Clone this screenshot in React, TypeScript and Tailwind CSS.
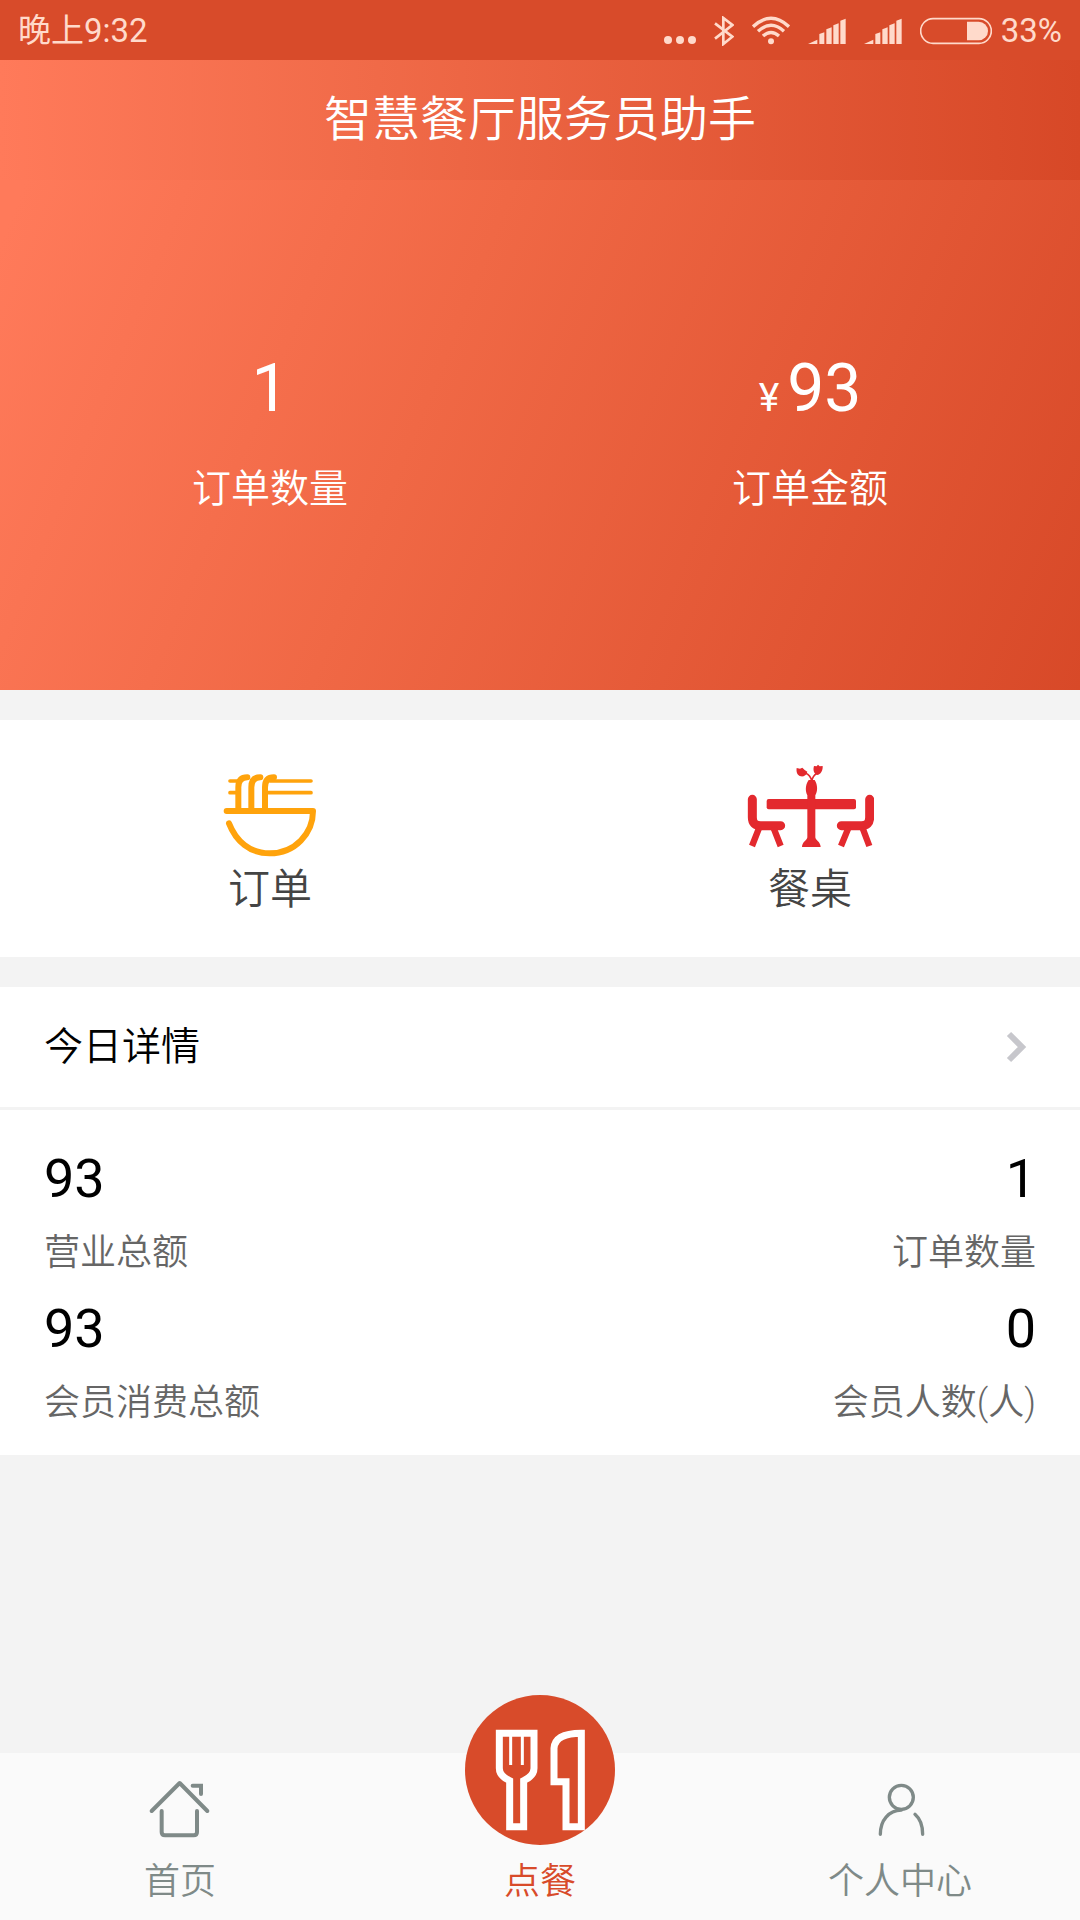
import type { ReactNode } from 'react'

interface Stat {
  value: string
  label: string
}

const stats: [Stat, Stat][] = [
  [
    { value: '93', label: '营业总额' },
    { value: '1', label: '订单数量' },
  ],
  [
    { value: '93', label: '会员消费总额' },
    { value: '0', label: '会员人数(人)' },
  ],
]

function SignalIcon() {
  return (
    <svg width="38" height="30" viewBox="508 45 114 90" fill="currentColor" aria-hidden>
      <path d="M508 129L536 116V129ZM542 129V99L557 94V129ZM563 129V85L579 79V129ZM584 129V73L600 67V129ZM605 129V59L621 53V129Z" />
    </svg>
  )
}

function StatusBar() {
  return (
    <div className="flex h-[60px] items-center justify-between bg-[#d84b2a] px-[18px] pt-[2px] text-[33px] leading-[48px] text-[#ffdacb]">
      <span>晚上9:32</span>
      <div className="flex items-center gap-[18px]">
        <svg width="32" height="30" viewBox="78 45 96 90" fill="currentColor" aria-hidden>
          <circle cx="90" cy="117" r="12" />
          <circle cx="126" cy="117" r="12" />
          <circle cx="162" cy="117" r="12" />
        </svg>
        <svg width="20" height="30" viewBox="228 45 60 90" fill="none" stroke="currentColor" strokeWidth="8" aria-hidden>
          <path d="M231 67L283 107L256 129V51L283 72L231 113" />
        </svg>
        <svg width="38" height="30" viewBox="342 45 114 90" fill="none" stroke="currentColor" strokeWidth="10" aria-hidden>
          <path d="M345 77Q399 27 453 77M360 91Q399 55 438 91M375 105Q399 84 423 105" />
          <circle cx="399" cy="121" r="9" fill="currentColor" stroke="none" />
        </svg>
        <SignalIcon />
        <SignalIcon />
        <div className="flex items-center gap-[9px]">
          <svg width="72" height="30" viewBox="831 45 216 90" fill="none" aria-hidden>
            <rect x="833" y="53" width="212" height="74" rx="37" stroke="currentColor" strokeWidth="5" />
            <path d="M972 62H1007A28 28 0 0 1 1007 118H972Z" fill="currentColor" />
          </svg>
          <span>33%</span>
        </div>
      </div>
    </div>
  )
}

function HeroStat({ unit, value, label }: { unit?: string; value: string; label: string }) {
  return (
    <div className="flex flex-col items-center text-white">
      <p className="flex items-baseline gap-2 text-[66px] leading-[80px]">
        {unit && <span className="text-[39px] leading-none">{unit}</span>}
        {value}
      </p>
      <p className="mt-6 text-[39px] leading-[72px] font-[350]">{label}</p>
    </div>
  )
}

function NoodleIcon() {
  return (
    <svg width="96" height="96" viewBox="66 42 288 288" fill="none" stroke="#ffa30c" strokeLinecap="round" strokeLinejoin="round" aria-hidden>
      <path d="M90 93H112M90 128H112M210 93H333M204 128H333" strokeWidth="11" />
      <path d="M115 178V112Q115 82 142 82M154 178V112Q154 82 181 82M195 178V112Q195 82 222 82" strokeWidth="18" />
      <path d="M80 183H339C339 250 285 310 209 310C150 310 108 274 87 220" strokeWidth="18" />
    </svg>
  )
}

function TableIcon() {
  return (
    <svg width="128" height="96" viewBox="78 42 384 288" fill="#e3292e" stroke="#e3292e" aria-hidden>
      <g stroke="none">
        <rect x="140" y="147" width="268" height="31" rx="6" />
        <path d="M266 90H284C294 106 293 124 286 136V262C286 270 302 276 302 291H246C246 276 262 270 262 262V136C256 124 255 106 266 90Z" />
        <path d="M230 54L240 56L247 53L254 60L262 65C260 76 251 80 243 79C232 77 228 66 230 54Z" />
        <path d="M282 48L290 49L294 44L299 49L308 48C309 62 302 74 291 75C280 70 279 58 282 48Z" />
      </g>
      <path d="M255 69Q272 74 275 94Q278 78 290 70" fill="none" strokeWidth="5" />
      <path d="M97 148V202Q97 227 122 227H182M449 148V202Q449 227 424 227H364" fill="none" strokeWidth="27" strokeLinecap="round" />
      <path d="M118 232L96 288M160 232L182 288M386 232L363 288M427 232L448 288" fill="none" strokeWidth="19" />
    </svg>
  )
}

function Shortcut({ label, children }: { label: string; children: ReactNode }) {
  return (
    <button className="flex flex-col items-center pt-11 pb-[37px]">
      {children}
      <span className="text-[42px] leading-[60px] font-[350] text-[#444]">{label}</span>
    </button>
  )
}

function StatCell({ value, label }: Stat) {
  return (
    <div>
      <p className="text-[54px] leading-[74px] text-black">{value}</p>
      <p className="text-[36px] leading-[74px] font-[350] text-[#666]">{label}</p>
    </div>
  )
}

function TabBar() {
  return (
    <nav className="mt-auto grid grid-cols-3 bg-[#fafafa] text-[36px] leading-[54px] font-[350] text-[#7f8a88]">
      <a href="#home" className="flex flex-col items-center gap-[14px] pt-6 pb-[11px]">
        <svg width="64" height="64" viewBox="84 111 192 192" fill="none" stroke="currentColor" strokeWidth="12" strokeLinecap="round" strokeLinejoin="round" aria-hidden>
          <path d="M95 213L179 129L262 213" />
          <path d="M125 213V276Q125 286 135 286H221Q231 286 231 276V213" />
          <path d="M218 137H243V162" strokeLinejoin="miter" />
        </svg>
        首页
      </a>
      <a href="#order" className="relative flex flex-col items-center justify-end pb-[11px] text-[#d84b2a]">
        <svg className="absolute -top-[58px]" width="150" height="150" viewBox="72 45 450 450" fill="none" stroke="#fff" aria-hidden>
          <circle cx="297" cy="270" r="225" fill="#d84b2a" stroke="none" />
          <path d="M175 160H279V265Q279 288 248 302V440H206V302Q175 288 175 265Z" strokeWidth="21" />
          <path d="M209 165V255M244 165V255" strokeWidth="9" />
          <path d="M421 160V440H375V305H339V205Q342 160 421 160Z" strokeWidth="21" />
        </svg>
        点餐
      </a>
      <a href="#me" className="flex flex-col items-center gap-[14px] pt-6 pb-[11px]">
        <svg width="64" height="64" viewBox="204 111 192 192" fill="none" stroke="currentColor" strokeWidth="10" strokeLinecap="round" aria-hidden>
          <circle cx="304" cy="172" r="36" />
          <path d="M241 283C241 240 266 212 304 210M345 223Q368 243 368 283" />
        </svg>
        个人中心
      </a>
    </nav>
  )
}

export default function App() {
  return (
    <div className="flex min-h-screen flex-col bg-[#f3f3f3] font-['Roboto','Noto_Sans_CJK_SC',sans-serif]">
      <StatusBar />

      <header className="flex h-[120px] items-center justify-center bg-linear-[90deg,#ff7a5a,#f06a48_35%,#d74827]">
        <h1 className="text-[48px] leading-[72px] font-[350] text-white">智慧餐厅服务员助手</h1>
      </header>

      <section className="grid h-[510px] grid-cols-2 items-center bg-linear-[112deg,#ff7a5a_2%,#f06845_40%,#d74827_102%] pt-1">
        <HeroStat value="1" label="订单数量" />
        <HeroStat unit="¥" value="93" label="订单金额" />
      </section>

      <section className="mt-[30px] grid grid-cols-2 bg-white">
        <Shortcut label="订单">
          <NoodleIcon />
        </Shortcut>
        <Shortcut label="餐桌">
          <TableIcon />
        </Shortcut>
      </section>

      <section className="mt-[30px] bg-white">
        <a href="#today" className="flex h-[123px] items-center justify-between border-b-3 border-[#f3f3f3] px-11">
          <h2 className="text-[39px] leading-[60px] font-[350] text-black">今日详情</h2>
          <svg width="30" height="36" viewBox="0 0 30 36" fill="none" stroke="#c7c7cc" strokeWidth="6" aria-hidden>
            <path d="M3 5L16 18L3 31" />
          </svg>
        </a>
        <div className="flex flex-col gap-[2px] px-11 pt-8 pb-[15px]">
          {stats.map(([left, right]) => (
            <div key={left.label} className="flex justify-between">
              <StatCell {...left} />
              <div className="text-right">
                <StatCell {...right} />
              </div>
            </div>
          ))}
        </div>
      </section>

      <TabBar />
    </div>
  )
}
